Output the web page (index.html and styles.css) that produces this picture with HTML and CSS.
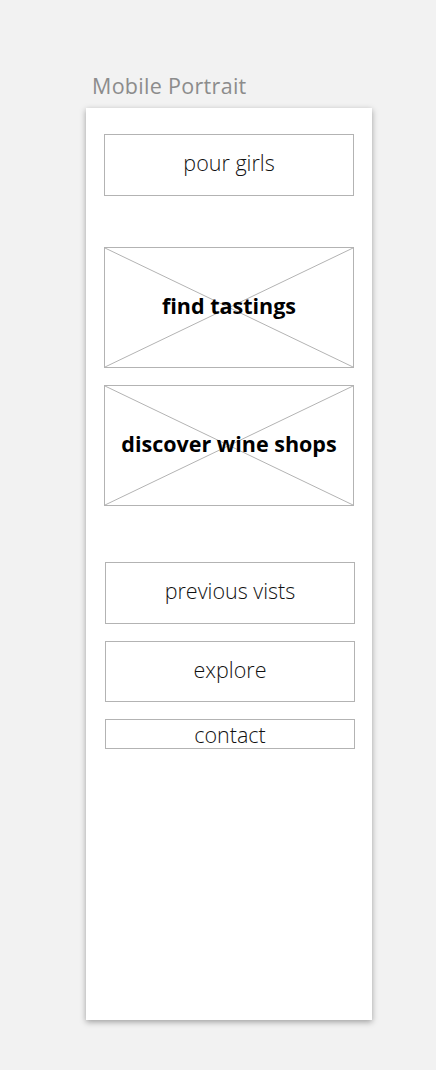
FILE: index.html
```html
<!DOCTYPE html>
<html lang="en">
<head>
    <meta charset="UTF-8">
    <title>Mobile Portrait</title>
    <link rel="stylesheet" href="styles.css">
</head>
<body>
    <div class="canvas">
        <div class="board-title">Mobile Portrait</div>
        <div class="artboard">
            <div class="box header">pour girls</div>

            <div class="box image first-image">
                <svg class="cross" viewBox="0 0 100 100" preserveAspectRatio="none">
                    <line x1="0" y1="0" x2="100" y2="100" vector-effect="non-scaling-stroke"/>
                    <line x1="100" y1="0" x2="0" y2="100" vector-effect="non-scaling-stroke"/>
                </svg>
                <span class="label">find tastings</span>
            </div>
            <div class="box image">
                <svg class="cross" viewBox="0 0 100 100" preserveAspectRatio="none">
                    <line x1="0" y1="0" x2="100" y2="100" vector-effect="non-scaling-stroke"/>
                    <line x1="100" y1="0" x2="0" y2="100" vector-effect="non-scaling-stroke"/>
                </svg>
                <span class="label">discover wine shops</span>
            </div>

            <div class="links">
                <div class="box link">previous vists</div>
                <div class="box link second">explore</div>
                <div class="box link small">contact</div>
            </div>
        </div>
    </div>
</body>
</html>
```

FILE: styles.css
```css
body {
    margin: 0;
    padding: 0;
    background-color: #f2f2f2;
    font-family: 'Open Sans', sans-serif;
}

.canvas {
    padding: 72px 0 0 86px;
    height: 998px;
}

.board-title {
    font-family: 'Open Sans', sans-serif;
    font-size: 21.5px;
    letter-spacing: 0.3px;
    color: #8c8c8c;
    margin-left: 6px;
    height: 36px;
    line-height: 28px;
}

.artboard {
    width: 286px;
    height: 912px;
    box-sizing: border-box;
    background-color: #fff;
    box-shadow: 0 2px 6px rgba(0, 0, 0, 0.35);
    padding: 26px 0 0 18px;
}

.box {
    width: 250px;
    height: 62px;
    box-sizing: border-box;
    border: 1px solid #b3b3b3;
    display: flex;
    align-items: center;
    justify-content: center;
    padding-bottom: 5px;
    font-size: 21.5px;
    font-weight: 300;
    color: #111;
}

.image {
    position: relative;
    height: 121px;
    margin-top: 17px;
    padding-bottom: 4px;
}

.first-image {
    margin-top: 51px;
}

.cross {
    position: absolute;
    top: 0;
    left: 0;
    width: 100%;
    height: 100%;
}

.cross line {
    stroke: #b3b3b3;
    stroke-width: 1;
}

.label {
    position: relative;
    font-weight: 700;
    font-size: 21.5px;
    color: #000;
}

.links {
    margin-top: 56px;
    margin-left: 1px;
}

.link {
    margin-bottom: 17px;
}

.second {
    height: 61px;
}

.small {
    height: 30px;
    padding-bottom: 0;
    padding-top: 1px;
}
```
